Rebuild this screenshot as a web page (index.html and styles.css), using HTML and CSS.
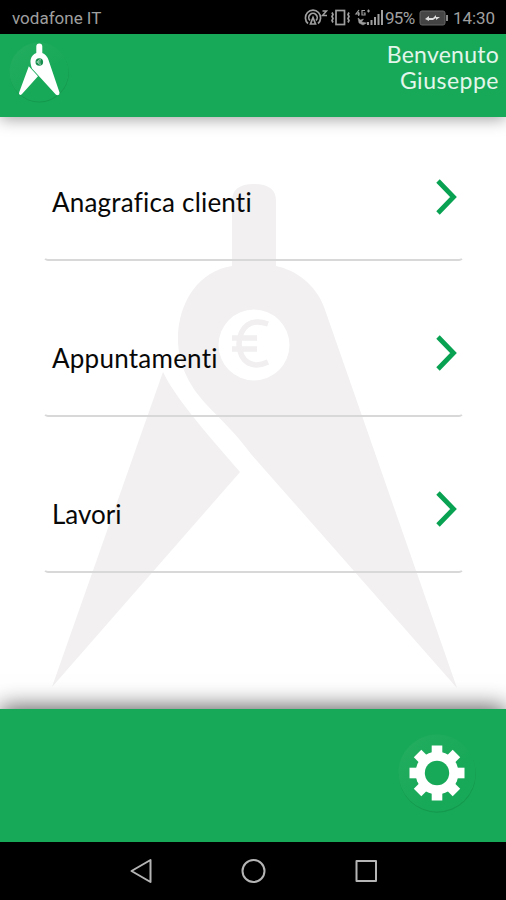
FILE: index.html
```html
<!DOCTYPE html>
<html lang="it">
<head>
<meta charset="utf-8">
<title>Menu</title>
<link rel="stylesheet" href="styles.css">
</head>
<body>
<div class="status">
  <span class="carrier">vodafone IT</span>
  <svg class="signals" width="82" height="24" viewBox="302 6 82 24" fill="none" stroke="#a0a0a0" stroke-width="1.7">
    <path d="M307 23.500A7.600 7.600 0 1 1 317 23.500M309 20.500A4.200 4.200 0 1 1 315 20.500M312 17.500l-2.500 6.500h5z"/>
    <path d="M321.500 11h4l-4 4.500h4.500" stroke-width="1.500"/>
    <rect x="335" y="10.500" width="8.500" height="14"/>
    <path d="M331 12.500l1 2-1 2 1 2-1 2 1 2M348 12.500l-1 2 1 2-1 2 1 2-1 2"/>
    <path d="M358 10l-3 4h4M357.700 12v4M364 10.500h-3v4.500h3v-2h-1.500M366 11h3M367.500 9.500v3" stroke-width="1.200"/>
    <path d="M357 18l2.500 2 3-1-2 3 5 1-3.500 2-4-2z" fill="#a0a0a0" stroke-width=".5"/>
    <path d="M367 25v-3M370.500 25v-5M374 25v-8M377.500 25v-11M381 25v-15" stroke-width="2"/>
  </svg>
  <span class="percent">95%</span>
  <svg class="battery" width="30" height="18" viewBox="0 0 30 18">
    <rect x="1" y="2" width="25" height="14" rx="2" fill="#454545" stroke="#666"/>
    <path d="M27 6h2v6h-2z" fill="#888"/>
    <path d="M6 10l4-3v2h4l3-3v2h4l-4 3V9l-3 2h-4v1z" fill="#ddd"/>
  </svg>
  <span class="clock">14:30</span>
</div>
<header class="header">
  <svg class="logo" width="64" height="64" viewBox="7 41 64 64">
    <defs><linearGradient id="disc" x1="0" y1="0" x2="1" y2="1"><stop offset="0" stop-color="#24ad60"/><stop offset=".6" stop-color="#18a958"/></linearGradient></defs>
    <circle cx="39.300" cy="73" r="29.500" fill="#129149" opacity=".65"/>
    <circle cx="39" cy="72" r="29.500" fill="url(#disc)"/>
    <g fill="#fff">
      <path d="M36.300 46.500a3 3 0 0 1 6 0V53Q46.500 54.500 48.500 60L59.500 92.500Q59.800 95 57.800 95.300L56 94.800 32 68.500Q27.500 57 36.300 53z"/>
      <path d="M28.800 66.300L38 76.300 22 94Q20.500 95.500 19.500 94.500 18.500 94 19.300 92z"/>
    </g>
    <circle cx="39.300" cy="62" r="3.800" fill="#168d4d"/>
    <path d="M41 60a2.200 2.200 0 1 0 0 4M36.500 62h4" fill="none" stroke="#a6dabb"/>
  </svg>
  <div class="welcome"><div class="hello">Benvenuto</div><div class="user">Giuseppe</div></div>
</header>
<main class="main">
  <svg class="watermark" width="506" height="592" viewBox="0 117 506 592">
    <g fill="#f2f0f1">
      <path d="M232 266V201Q232 184 254 184T276 201V266C296 270 316 285 324 307L457 688 251 454C232 428 211 411 200 397 191 386 178 366 178 339 178 302 199 271 232 266z"/>
      <path d="M163 372C175 397 201 427 240 472L52 687z"/>
    </g>
    <circle cx="254" cy="345" r="35.500" fill="#fff"/>
    <path d="M268 324C251 318 240 326 239 344 240 363 253 369 268 362M232 338h25M232 349h25" fill="none" stroke="#f1eff0" stroke-width="5.500"/>
  </svg>
  <nav class="menu">
    <a class="item"><span class="label clients">Anagrafica clienti</span><svg class="chevron" width="24" height="38" viewBox="0 0 24 38"><path d="M3 3L18.500 19 3 35"/></svg></a>
    <a class="item"><span class="label dates">Appuntamenti</span><svg class="chevron" width="24" height="38" viewBox="0 0 24 38"><path d="M3 3L18.500 19 3 35"/></svg></a>
    <a class="item"><span class="label jobs">Lavori</span><svg class="chevron" width="24" height="38" viewBox="0 0 24 38"><path d="M3 3L18.500 19 3 35"/></svg></a>
  </nav>
</main>
<footer class="footer">
  <svg class="settings" width="82" height="82" viewBox="-41 -41 82 82">
    <circle cx=".3" cy="1.300" r="38.500" fill="#129149" opacity=".65"/>
    <circle r="38.500" fill="url(#disc)"/>
    <g fill="#fff">
      <g id="teeth"><rect x="-5.300" y="-27.500" width="10.600" height="55"/><rect x="-27.500" y="-5.300" width="55" height="10.600"/></g>
      <use href="#teeth" transform="rotate(45)"/>
      <circle r="21.500"/>
    </g>
    <circle r="12.200" fill="#18a958"/>
  </svg>
</footer>
<div class="navbar">
  <svg width="506" height="58" viewBox="0 842 506 58" fill="none" stroke="#b5b5b5" stroke-width="2" stroke-linejoin="round">
    <path d="M131.500 871L150.500 860V882z"/>
    <circle cx="253.500" cy="871" r="11"/>
    <rect x="356.500" y="861" width="19.500" height="20"/>
  </svg>
</div>
</body>
</html>
```
FILE: styles.css
```css
* { box-sizing: border-box; }
body {
  margin: 0;
  width: 506px;
  height: 900px;
  display: flex;
  flex-direction: column;
  overflow: hidden;
  background: #fff;
  font-family: Lato, "Open Sans", sans-serif;
}
.status {
  height: 34px;
  flex: none;
  display: flex;
  align-items: center;
  padding: 2px 11px 0 12px;
  background: #000;
  color: #a0a0a0;
  font: 17px/20px Roboto, sans-serif;
}
.carrier { flex: 1; letter-spacing: 0; }
.percent { width: 34px; letter-spacing: -.7px; }
.battery { margin: 0 4px 0 0; }
.clock { width: 42px; letter-spacing: -.1px; }
.header {
  height: 83px;
  flex: none;
  display: flex;
  justify-content: space-between;
  padding: 7px 7px 0;
  background: #18a958;
  box-shadow: 0 2px 15px rgba(0, 0, 0, .38);
  z-index: 1;
}
.welcome {
  display: flex;
  flex-direction: column;
  align-items: flex-end;
  color: #e3f6eb;
  font-size: 23px;
  line-height: 26px;
}
.hello { letter-spacing: .25px; }
.user { letter-spacing: .5px; }
.main { position: relative; flex: 1; }
.watermark { position: absolute; inset: 0; }
.menu { position: relative; padding: 0 42px 0 43px; }
.item {
  height: 156px;
  display: flex;
  align-items: flex-start;
  justify-content: space-between;
  padding: 72px 4px 0 7px;
  border: 2px solid transparent;
  border-bottom-color: #d9d8d8;
  border-radius: 5px;
}
.item:first-child { height: 144px; padding-top: 60px; }
.label {
  color: #080808;
  font-size: 26px;
  line-height: 46px;
  white-space: nowrap;
}
.clients { letter-spacing: .2px; }
.dates { letter-spacing: .25px; }
.chevron { fill: none; stroke: #09a253; stroke-width: 4.8; margin: -1px -1px 0 0; }
.footer {
  height: 133px;
  flex: none;
  display: flex;
  justify-content: flex-end;
  padding: 23px 28px 0;
  background: #18a958;
  box-shadow: 0 -2px 22px rgba(0, 0, 0, .65);
  z-index: 1;
}
.navbar { height: 58px; flex: none; background: #000; z-index: 2; }
```
